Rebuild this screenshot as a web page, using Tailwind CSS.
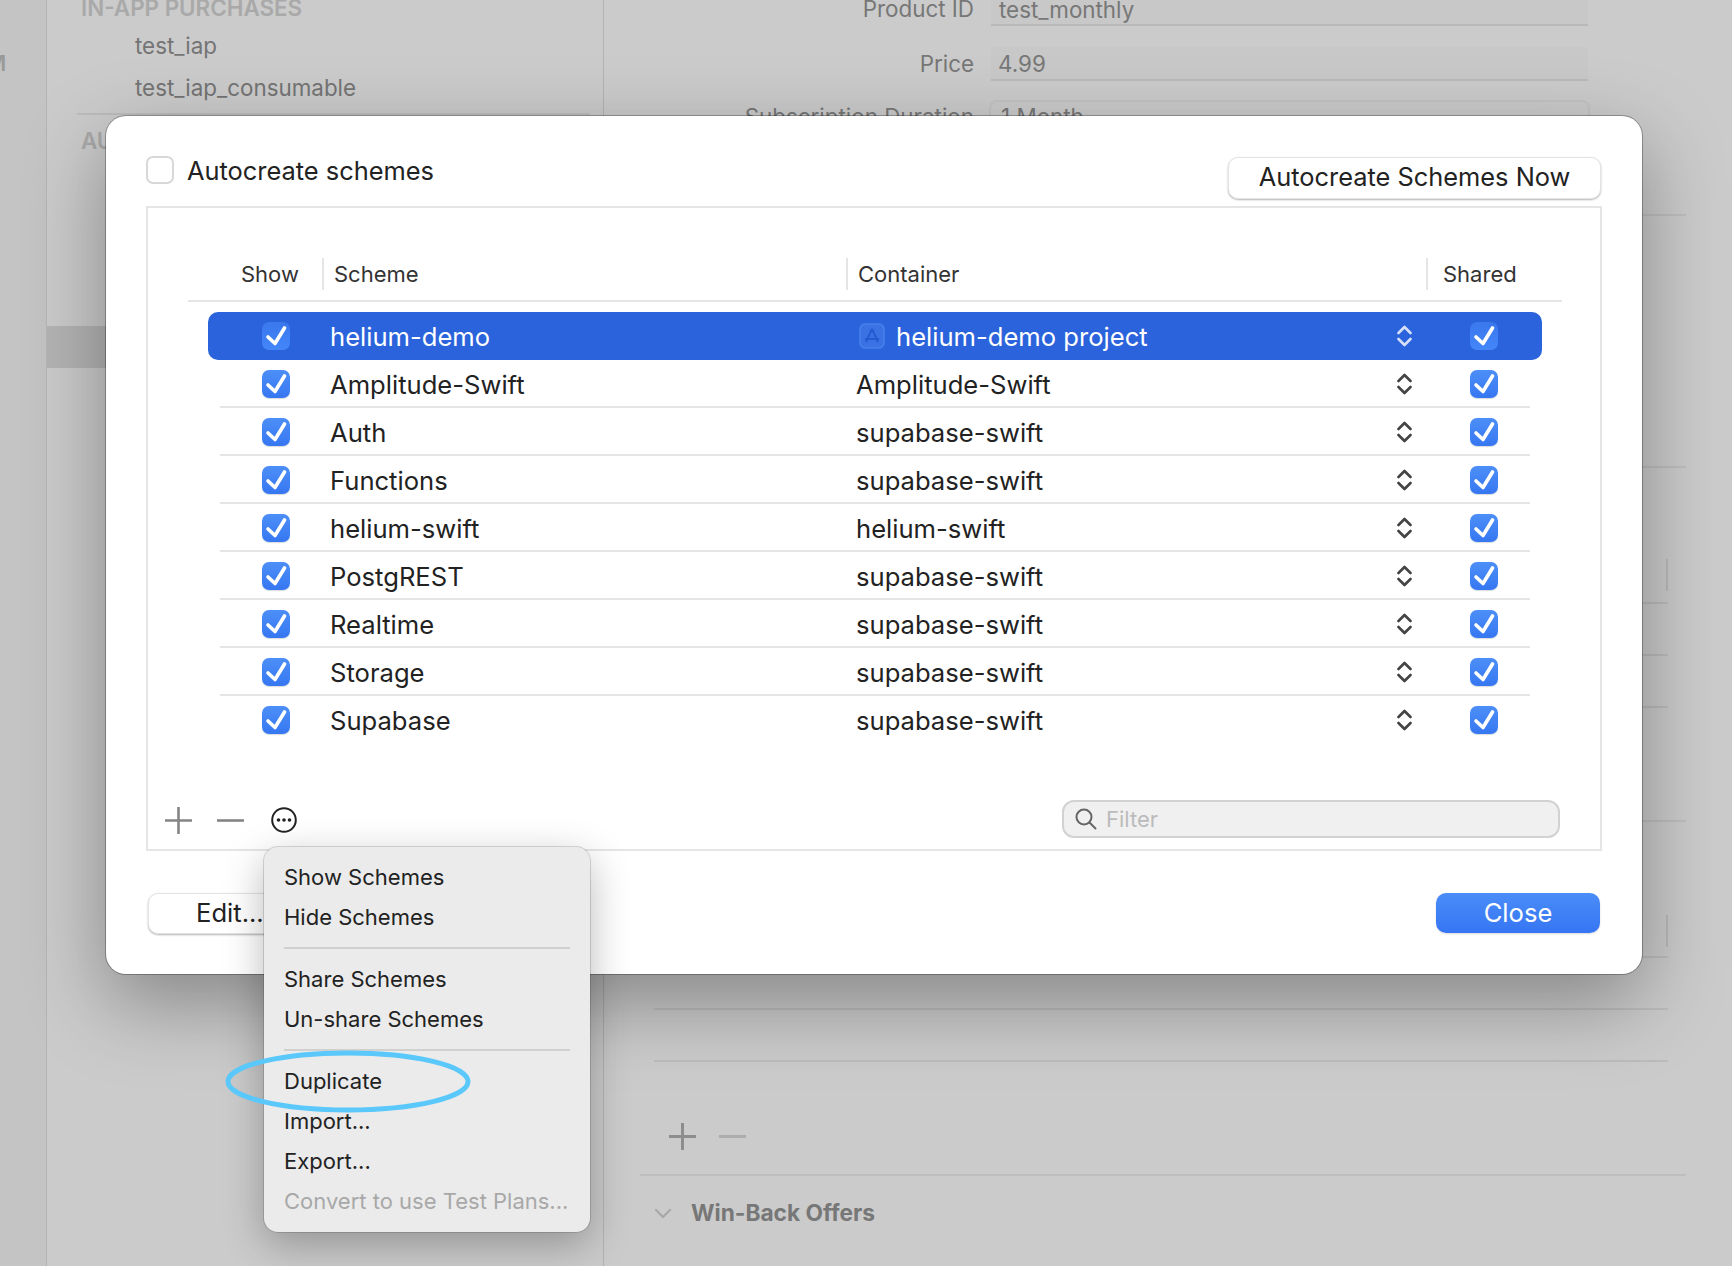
<!DOCTYPE html>
<html lang="en">
<head>
    <meta charset="UTF-8">
    <title>Manage Schemes</title>
    <script src="https://cdn.jsdelivr.net/npm/@tailwindcss/browser@4"></script>
</head>
<body class="relative w-[1732px] h-[1266px] overflow-hidden bg-[#cbcbcb] font-['Inter',sans-serif] antialiased">

    <!-- dimmed xcode window behind the sheet -->
    <div class="flex h-full">
        <div class="relative w-[47px] shrink-0 bg-[#c4c4c4] border-r border-[#b5b5b5] overflow-hidden">
            <span class="absolute left-[-14px] top-[47px] text-[22px] font-semibold text-[#999]">M</span>
        </div>

        <div class="w-[557px] shrink-0 border-r border-[#b3b3b3] flex flex-col">
            <div class="mt-[-6px] pl-[34px] text-[22.4px] font-semibold text-[#a9a9a9] leading-[28px]">IN-APP PURCHASES</div>
            <div class="mt-[3px] pl-[88px] text-[22.4px] text-[#747474] leading-[42px]">test_iap</div>
            <div class="pl-[88px] text-[22.4px] text-[#747474] leading-[42px]">test_iap_consumable</div>
            <div class="mt-[4px] ml-[30px] w-[513px] h-[2px] bg-[#bcbcbc]"></div>
            <div class="mt-[12px] pl-[34px] text-[22.4px] font-semibold text-[#a9a9a9] leading-[28px]">AU</div>
            <div class="mt-[171px] h-[42px] bg-[#b4b4b4]"></div>
        </div>

        <div class="flex-1 flex flex-col text-[22.4px] text-[#777]">
            <div class="mt-[-8px] flex items-center gap-[17px] h-[34px]">
                <div class="w-[370px] text-right">Product ID</div>
                <div class="w-[597px] h-[34px] pl-[8px] bg-[#c8c8c8] border-b-2 border-[#b9b9b9] leading-[36px]">test_monthly</div>
            </div>
            <div class="mt-[21px] flex items-center gap-[17px] h-[34px]">
                <div class="w-[370px] text-right">Price</div>
                <div class="w-[597px] h-[34px] pl-[7px] bg-[#c8c8c8] border-b-2 border-[#b9b9b9] leading-[34px]">4.99</div>
            </div>
            <div class="mt-[19px] flex items-center gap-[15px] h-[34px]">
                <div class="w-[370px] text-right">Subscription Duration</div>
                <div class="w-[601px] h-[34px] pl-[10px] border-2 border-[#c3c3c3] rounded-[8px] leading-[30px]">1 Month</div>
            </div>

            <div class="ml-[36px] w-[1046px] flex flex-col">
                <div class="mt-[80px] h-[2px] bg-[#bebebe]"></div>
                <div class="mt-[250px] h-[2px] bg-[#bebebe]"></div>
                <div class="ml-[1026px] mt-[91px] w-[2px] h-[32px] bg-[#b9b9b9]"></div>
                <div class="ml-[14px] mt-[11px] w-[1014px] h-[2px] bg-[#bcbcbc]"></div>
                <div class="ml-[14px] mt-[50px] w-[1014px] h-[2px] bg-[#bcbcbc]"></div>
                <div class="ml-[14px] mt-[50px] w-[1014px] h-[2px] bg-[#bcbcbc]"></div>
                <div class="mt-[112px] h-[2px] bg-[#bebebe]"></div>
                <div class="ml-[1026px] mt-[93px] w-[2px] h-[32px] bg-[#b9b9b9]"></div>
                <div class="ml-[14px] mt-[9px] w-[1014px] h-[2px] bg-[#bcbcbc]"></div>
                <div class="ml-[14px] mt-[50px] w-[1014px] h-[2px] bg-[#bcbcbc]"></div>
                <div class="ml-[14px] mt-[50px] w-[1014px] h-[2px] bg-[#bcbcbc]"></div>

                <div class="ml-[29px] mt-[60px] flex items-center gap-[23px] h-[28px]">
                    <svg class="w-[27px] h-[27px]" viewBox="0 0 27 27" fill="none" stroke="#8d8d8d" stroke-width="3"><path d="M0 13.5H27M13.5 0V27"/></svg>
                    <svg class="w-[27px] h-[27px]" viewBox="0 0 27 27" fill="none" stroke="#adadad" stroke-width="3"><path d="M0 13.5H27"/></svg>
                </div>
                <div class="mt-[24px] h-[2px] bg-[#bebebe]"></div>
                <div class="mt-[25px] flex items-center h-[24px] ml-[14px]">
                    <svg class="w-[18px] h-[11px]" viewBox="0 0 18 11" fill="none" stroke="#a9a9a9" stroke-width="2.4" stroke-linecap="round" stroke-linejoin="round"><path d="M2 2l7 7 7-7"/></svg>
                    <span class="ml-[19px] text-[22.7px] font-bold text-[#777]">Win-Back Offers</span>
                </div>
            </div>
        </div>
    </div>

    <!-- manage schemes sheet -->
    <div class="absolute left-[106px] top-[116px] w-[1536px] h-[858px] px-[40px] pt-[40px] bg-white rounded-[20px] text-[#222] shadow-[0_0_0_1px_rgba(0,0,0,0.28),0_28px_80px_rgba(0,0,0,0.34)]">
        <div class="flex items-start h-[50px]">
            <div class="w-[28px] h-[28px] rounded-[7px] border-2 border-[#d8d8d8] bg-white"></div>
            <span class="ml-[13px] mt-[1px] text-[25.4px] leading-[28px]">Autocreate schemes</span>
            <button class="ml-auto mr-[1px] mt-[1px] pb-[2px] w-[373px] h-[42px] rounded-[10px] bg-white border border-[#e4e4e4] shadow-[0_1px_2px_rgba(0,0,0,0.3)] text-[25.4px] text-[#222]">Autocreate Schemes Now</button>
        </div>

        <div class="h-[645px] border-2 border-[#e5e5e5] flex flex-col">
            <div class="mt-[50px] ml-[40px] w-[1374px] h-[44px] border-b-2 border-[#e5e5e5] flex items-start text-[22px] text-[#333] leading-[32px]">
                <div class="w-[134px] pl-[53px]">Show</div>
                <div class="w-[524px] h-[32px] border-l-2 border-[#e5e5e5] pl-[10px]">Scheme</div>
                <div class="w-[580px] h-[32px] border-l-2 border-[#e5e5e5] pl-[10px]">Container</div>
                <div class="h-[32px] border-l-2 border-[#e5e5e5] pl-[15px]">Shared</div>
            </div>

            <div id="rows" class="mt-[10px] flex flex-col text-[25.6px]">
                <div class="ml-[60px] mr-[58px] h-[48px] pl-[54px] rounded-[10px] bg-[#2b63dc] text-white flex items-center">
                    <div class="w-[28px] h-[28px] rounded-[7px] bg-gradient-to-b from-[#3a78ec] to-[#4387fa] flex items-center justify-center">
                        <svg class="w-[28px] h-[28px]" viewBox="0 0 28 28" fill="none" stroke="white" stroke-width="3.6" stroke-linecap="round" stroke-linejoin="round"><path d="M6 15l7 6.5L22.5 6"/></svg>
                    </div>
                    <div class="ml-[40px] mt-[3px] w-[526px]">helium-demo</div>
                    <div class="w-[541px] flex items-center">
                        <svg class="ml-[3px] w-[26px] h-[26px]" viewBox="0 0 26 26" fill="none"><rect x="1" y="1" width="24" height="24" rx="5" fill="#3a72e4" stroke="#4a80ea" stroke-width="1.5"/><path d="M13 6l-6 13M13 6l6 13M6 16h14" stroke="#235ad0" stroke-width="2"/></svg>
                        <span class="ml-[11px] mt-[3px]">helium-demo project</span>
                    </div>
                    <svg class="w-[15px] h-[22px]" viewBox="0 0 15 22" fill="none" stroke="#d6e0f8" stroke-width="2.6" stroke-linecap="round" stroke-linejoin="round"><path d="M1.5 8l6-6 6 6M1.5 14l6 6 6-6"/></svg>
                    <div class="ml-[58px] w-[28px] h-[28px] rounded-[7px] bg-gradient-to-b from-[#3a78ec] to-[#4387fa]">
                        <svg class="w-[28px] h-[28px]" viewBox="0 0 28 28" fill="none" stroke="white" stroke-width="3.6" stroke-linecap="round" stroke-linejoin="round"><path d="M6 15l7 6.5L22.5 6"/></svg>
                    </div>
                </div>
            </div>

            <div class="mt-[56px] h-[38px] pl-[17px] pr-[40px] flex items-center">
                <svg class="mt-[2px] w-[27px] h-[27px]" viewBox="0 0 27 27" fill="none" stroke="#858585" stroke-width="2.6"><path d="M0 13.5H27M13.5 0V27"/></svg>
                <svg class="mt-[2px] ml-[25px] w-[27px] h-[27px]" viewBox="0 0 27 27" fill="none" stroke="#858585" stroke-width="2.6"><path d="M0 13.5H27"/></svg>
                <svg class="mt-[2px] ml-[27px] w-[26px] h-[26px]" viewBox="0 0 26 26" fill="none"><circle cx="13" cy="13" r="11.8" stroke="#222" stroke-width="2"/><circle cx="7.5" cy="13" r="1.8" fill="#222"/><circle cx="13" cy="13" r="1.8" fill="#222"/><circle cx="18.5" cy="13" r="1.8" fill="#222"/></svg>
                <div class="ml-auto w-[498px] h-[38px] pl-[11px] rounded-[12px] bg-[#f0f0f0] border-2 border-[#d2d2d2] flex items-center">
                    <svg class="w-[22px] h-[22px]" viewBox="0 0 22 22" fill="none" stroke="#666" stroke-width="2" stroke-linecap="round"><circle cx="9" cy="9" r="7.5"/><path d="M14.5 14.5L20.5 20.5"/></svg>
                    <span class="ml-[9px] text-[22px] text-[#bbb]">Filter</span>
                </div>
            </div>
        </div>

        <div class="mt-[42px] flex items-start justify-between px-[2px]">
            <button class="w-[166px] h-[41px] pl-[47px] pb-[1px] text-left rounded-[10px] bg-white border border-[#e4e4e4] shadow-[0_1px_2px_rgba(0,0,0,0.3)] text-[25.6px] text-[#222]">Edit...</button>
            <button class="w-[164px] h-[40px] rounded-[10px] bg-gradient-to-b from-[#4a8df8] to-[#3675f3] shadow-[0_1px_2px_rgba(0,0,0,0.15)] text-[25.6px] text-white">Close</button>
        </div>
    </div>

    <!-- popup menu from the ellipsis button -->
    <div class="absolute left-[264px] top-[847px] w-[326px] h-[385px] pt-[10px] rounded-[14px] bg-[#ebebeb] text-[22px] text-[#222] shadow-[0_0_0_1px_rgba(0,0,0,0.14),0_12px_40px_rgba(0,0,0,0.28)]">
        <div class="h-[40px] pl-[20px] leading-[40px]">Show Schemes</div>
        <div class="h-[40px] pl-[20px] leading-[40px]">Hide Schemes</div>
        <div class="my-[10px] mx-[20px] h-[2px] bg-[#d0d0d0]"></div>
        <div class="h-[40px] pl-[20px] leading-[40px]">Share Schemes</div>
        <div class="h-[40px] pl-[20px] leading-[40px]">Un-share Schemes</div>
        <div class="my-[10px] mx-[20px] h-[2px] bg-[#d0d0d0]"></div>
        <div class="h-[40px] pl-[20px] leading-[40px]">Duplicate</div>
        <div class="h-[40px] pl-[20px] leading-[40px]">Import...</div>
        <div class="h-[40px] pl-[20px] leading-[40px]">Export...</div>
        <div class="h-[40px] pl-[20px] leading-[40px] text-[#a8a8a8]">Convert to use Test Plans...</div>
    </div>

    <!-- annotation ring around Duplicate -->
    <svg class="absolute left-[224px] top-[1049px] w-[248px] h-[66px]" viewBox="0 0 248 66" fill="none">
        <ellipse cx="124" cy="32.5" rx="120" ry="28.5" stroke="#5ac8fa" stroke-width="5"/>
    </svg>

    <script>
        const schemes = [
            ['Amplitude-Swift', 'Amplitude-Swift'],
            ['Auth', 'supabase-swift'],
            ['Functions', 'supabase-swift'],
            ['helium-swift', 'helium-swift'],
            ['PostgREST', 'supabase-swift'],
            ['Realtime', 'supabase-swift'],
            ['Storage', 'supabase-swift'],
            ['Supabase', 'supabase-swift'],
        ];

        const checkbox = `<div class="w-[28px] h-[28px] rounded-[7px] bg-gradient-to-b from-[#4d8ff8] to-[#3677f2] shadow-[0_1px_1px_rgba(0,0,0,0.15)]">
            <svg class="w-[28px] h-[28px]" viewBox="0 0 28 28" fill="none" stroke="white" stroke-width="3.6" stroke-linecap="round" stroke-linejoin="round"><path d="M6 15l7 6.5L22.5 6"/></svg>
        </div>`;

        const rows = document.getElementById('rows');
        schemes.forEach(([name, container], i) => {
            const row = document.createElement('div');
            const last = i === schemes.length - 1;
            row.className = last
                ? 'ml-[72px] mr-[70px] h-[48px] pl-[42px] flex items-center'
                : 'ml-[72px] mr-[70px] h-[48px] pl-[42px] pt-[2px] flex items-center border-b-2 border-[#e5e5e5]';
            row.innerHTML = `${checkbox}
                <div class="ml-[40px] mt-[3px] w-[526px]">${name}</div>
                <div class="mt-[3px] w-[541px]">${container}</div>
                <svg class="w-[15px] h-[22px]" viewBox="0 0 15 22" fill="none" stroke="#444" stroke-width="2.6" stroke-linecap="round" stroke-linejoin="round"><path d="M1.5 8l6-6 6 6M1.5 14l6 6 6-6"/></svg>
                <div class="ml-[58px]">${checkbox}</div>`;
            rows.appendChild(row);
        });
    </script>
</body>
</html>
